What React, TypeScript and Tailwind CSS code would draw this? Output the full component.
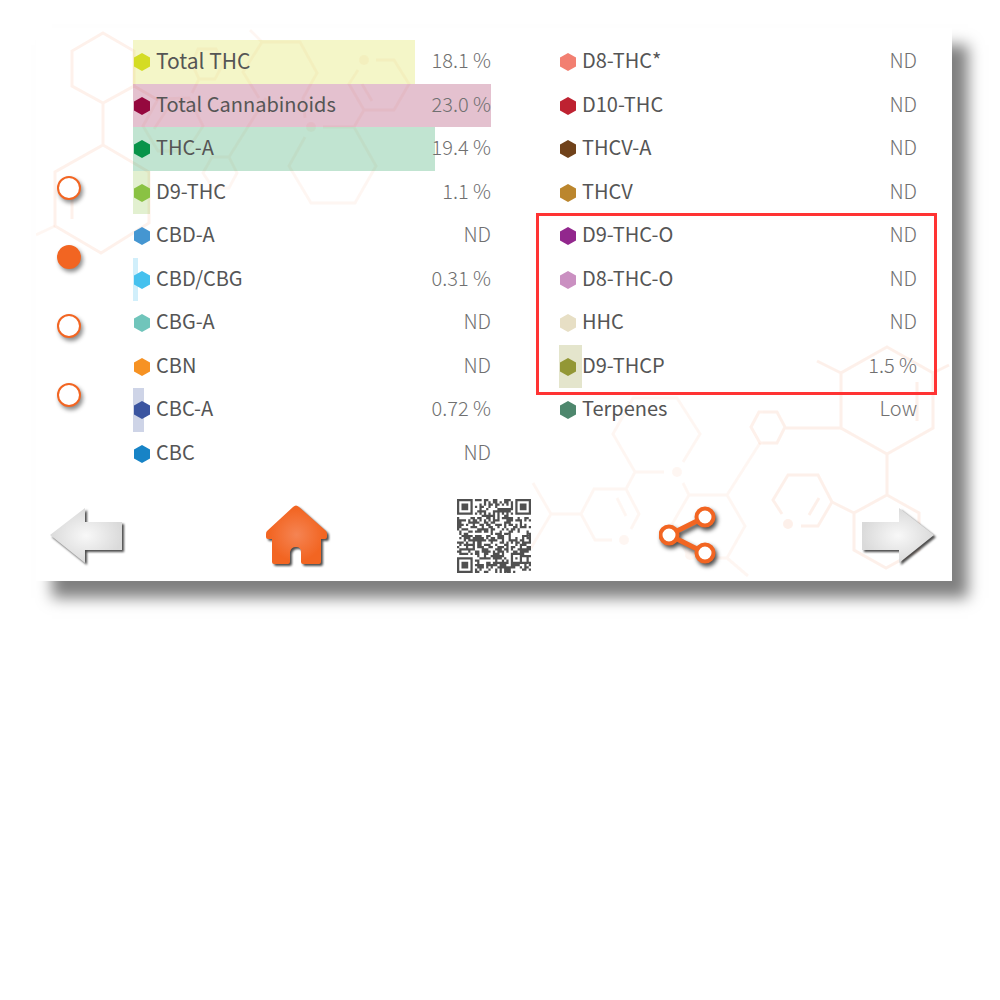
import React from 'react';

type Compound = {
  name: string;
  color: string;
  value?: number;
  label?: string;
};

const cannabinoids: Compound[] = [
  { name: 'Total THC', color: '#d4dc24', value: 18.1, label: '18.1 %' },
  { name: 'Total Cannabinoids', color: '#95083e', value: 23.0, label: '23.0 %' },
  { name: 'THC-A', color: '#079349', value: 19.4, label: '19.4 %' },
  { name: 'D9-THC', color: '#8ac243', value: 1.1, label: '1.1 %' },
  { name: 'CBD-A', color: '#4596d1' },
  { name: 'CBD/CBG', color: '#46c1ee', value: 0.31, label: '0.31 %' },
  { name: 'CBG-A', color: '#70c5bb' },
  { name: 'CBN', color: '#f69223' },
  { name: 'CBC-A', color: '#3b55a0', value: 0.72, label: '0.72 %' },
  { name: 'CBC', color: '#1783c6' },
];

const others: Compound[] = [
  { name: 'D8-THC*', color: '#f27f71' },
  { name: 'D10-THC', color: '#be2231' },
  { name: 'THCV-A', color: '#70421a' },
  { name: 'THCV', color: '#bb862d' },
  { name: 'D9-THC-O', color: '#92278d' },
  { name: 'D8-THC-O', color: '#ca90c1' },
  { name: 'HHC', color: '#e7dfc5' },
  { name: 'D9-THCP', color: '#939735', value: 1.5, label: '1.5 %' },
  { name: 'Terpenes', color: '#4e876d', label: 'Low' },
];

const MAX_VALUE = 23;
const pages = ['Overview', 'Cannabinoids', 'Terpenes', 'Details'];

const Results = ({ rows, title }: { rows: Compound[]; title: string }) => (
  <table aria-label={title} className="w-full border-collapse">
    <tbody>
      {rows.map((row, i) => (
        <tr key={row.name} className={i % 2 === 0 ? 'relative h-11' : 'relative h-[43px]'}>
          <th scope="row" className="p-0 text-left font-normal text-[#555]">
            {row.value !== undefined && (
              <span
                className="absolute inset-y-0 left-0 opacity-25"
                style={{ width: `${(row.value / MAX_VALUE) * 100}%`, backgroundColor: row.color }}
              />
            )}
            <span className="relative flex items-center gap-1.5 pl-px">
              <svg viewBox="0 0 16 18" className="h-[18px] w-4" fill={row.color} aria-hidden="true">
                <path d="M8 0l8 4.5v9L8 18l-8-4.5v-9z" />
              </svg>
              <span className={row.name === 'Total THC' ? 'pb-1 text-[21px]' : 'pb-1'}>{row.name}</span>
            </span>
          </th>
          <td className="relative p-0 pb-1 text-right font-light text-[#707070]">{row.label ?? 'ND'}</td>
        </tr>
      ))}
    </tbody>
  </table>
);

// Molecule line art behind the results
const Molecules = () => (
  <svg
    viewBox="36 28 916 553"
    className="absolute inset-0 h-full w-full"
    fill="none"
    stroke="#f26522"
    strokeWidth="3"
    aria-hidden="true"
  >
    <g opacity="0.09">
      <path d="M103 33l31 18v35l-31 17-31-17V51zM103 103v42M103 145l46 27v51l-48 30-46-27v-54zM72 200v19M134 86l24 14" />
      <path d="M887 347l46 26v55l-46 26-46-26v-55zM817 361l24 12M933 373l16-8M917 382v39M887 454v41M887 495l32 18v37l-33 18-32-18v-37zM854 513l-22-11" />
      <path d="M782 514l-9-14 15-25h30l14 27-14 24h-17M819 498l-10 17" />
      <circle cx="788" cy="524" r="5" fill="#f26522" stroke="none" />
      <path d="M759 412h18l8 15-8 16h-17l-9-16zM785 428h56" />
    </g>
    <g opacity="0.05">
      <path d="M158 99l31-1 14 28-16 25h-29l-15-25zM168 108l-14 21" />
      <path d="M55 226l-19 9M198 49h18l7 15-8 15h-16l-7-15zM199 79l-7 14M212 157h17l8 16-8 15h-16l-10-15zM229 157l37-59" />
      <path d="M250 30l12 12h38l17 31-14 25 2 20M262 42l-19 30 16 26" />
      <path d="M323 127h31l22 39-21 37h-44l-22-37 16-29M354 127l10-17h30l15-26-15-24h-18M364 110l-15-26 9-14M362 84l10 17" />
      <circle cx="311" cy="127" r="5" fill="#f26522" stroke="none" />
      <circle cx="364" cy="60" r="5" fill="#f26522" stroke="none" />
      <path d="M683 462l17-28-23-36h-44l-20 36 22 38h29M635 472l-9 17M631 529l8-15-13-25h-32l-13 25 14 26h17M617 498l9 18M581 514h-30l-18-31M551 514l-20 34" />
      <circle cx="677" cy="472" r="5" fill="#f26522" stroke="none" />
      <circle cx="624" cy="540" r="5" fill="#f26522" stroke="none" />
      <path d="M683 483l6 12h38l18 31-18 32h-37l-19-32 18-31M727 558l21 18M727 495l33-52" />
      <circle cx="690" cy="555" r="5" fill="#f26522" stroke="none" />
    </g>
  </svg>
);

const QR_SIZE = 33;

const isDark = (x: number, y: number) => {
  // finder patterns in three corners
  const corners = [[0, 0], [QR_SIZE - 7, 0], [0, QR_SIZE - 7]];
  for (const [cx, cy] of corners) {
    const d = Math.max(Math.abs(x - cx - 3), Math.abs(y - cy - 3));
    if (d <= 4) return d !== 2 && d !== 4;
  }
  // alignment pattern
  const a = Math.max(Math.abs(x - 26), Math.abs(y - 26));
  if (a <= 2) return a !== 1;
  // timing lines
  if (x === 6 || y === 6) return (x + y) % 2 === 0;
  const n = Math.sin(x * 127.1 + y * 311.7) * 43758.5453;
  return n - Math.floor(n) < 0.53;
};

const QrCode = () => {
  let d = '';
  for (let y = 0; y < QR_SIZE; y++) {
    for (let x = 0; x < QR_SIZE; x++) {
      if (isDark(x, y)) d += `M${x} ${y}h1v1h-1z`;
    }
  }
  return (
    <svg viewBox="0 0 33 33" className="h-[74px] w-[74px]" fill="#505050" role="img" aria-label="QR code">
      <path d={d} />
    </svg>
  );
};

const Arrow = ({ id, className }: { id: string; className?: string }) => (
  <svg viewBox="0 0 73 58" className={className} aria-hidden="true">
    <defs>
      <radialGradient id={id} cx="0.5" cy="0.5" r="0.5">
        <stop offset="0" stopColor="#f8f8f8" />
        <stop offset="1" stopColor="#dadada" />
      </radialGradient>
    </defs>
    <path d="M0 15h37V1l35 27-35 28V43H0z" fill={`url(#${id})`} />
  </svg>
);

const App = () => {
  return (
    <div className="bg-white pt-7 pr-12 pb-12 pl-9 font-['Noto_Sans_CJK_SC','Noto_Sans',sans-serif] text-xl leading-none">
      <main className="relative bg-white pt-3 shadow-[16px_17px_14px_rgba(0,0,0,0.5)]">
        <Molecules />

        <div className="relative flex pr-[35px]">
          {/* Page dots */}
          <nav aria-label="Pages" className="flex w-[97px] shrink-0 flex-col gap-[45px] pt-[136px] pl-[21px]">
            {pages.map((page, i) => (
              <button
                key={page}
                type="button"
                aria-label={page}
                className={
                  i === 1
                    ? 'size-6 rounded-full border-2 border-[#f26522] bg-[#f26522] shadow-[2px_3px_4px_rgba(0,0,0,0.45)]'
                    : 'size-6 rounded-full border-2 border-[#f26522] bg-white shadow-[2px_3px_4px_rgba(0,0,0,0.45)]'
                }
              />
            ))}
          </nav>

          <div className="grid flex-1 grid-cols-2 items-start gap-[68px]">
            <Results rows={cannabinoids} title="Cannabinoids" />
            <div className="relative">
              <Results rows={others} title="Other compounds" />
              <div className="pointer-events-none absolute top-[173px] -right-5 -left-[23px] h-[182px] border-[3px] border-[#ff3333]" />
            </div>
          </div>
        </div>

        {/* Toolbar */}
        <div className="relative flex items-center justify-between pt-6 pr-[17px] pb-2 pl-[13px]">
          <button type="button" aria-label="Previous">
            <span className="block drop-shadow-[2px_2px_1px_rgba(0,0,0,0.7)]">
              <Arrow id="arrow-prev" className="h-[58px] w-[73px] -scale-x-100" />
            </span>
          </button>
          <div className="flex items-center gap-32">
            <button type="button" aria-label="Home">
              <svg viewBox="0 0 64 62" className="h-[62px] w-16 drop-shadow-[2px_2px_1px_rgba(0,0,0,0.7)]">
                <defs>
                  <radialGradient id="home" cx="0.5" cy="0.5" r="0.45">
                    <stop offset="0" stopColor="#f58453" />
                    <stop offset="1" stopColor="#f26522" />
                  </radialGradient>
                </defs>
                <path
                  d="M28 2q3-3 6 0l27 24q1 1 1 3v3q0 2-2 2h-4v23q0 2-2 2H38q-2 0-2-2V47q0-5-5-5t-6 5v10q0 2-2 2H9q-2 0-2-2V34H3q-2 0-2-2v-3q0-2 1-3z"
                  fill="url(#home)"
                />
              </svg>
            </button>
            <QrCode />
            <button type="button" aria-label="Share">
              <svg
                viewBox="0 0 60 60"
                className="size-[60px] drop-shadow-[2px_3px_2px_rgba(0,0,0,0.7)]"
                fill="#fff"
                stroke="#f26522"
                strokeWidth="4"
              >
                <path d="M46 11L10 29l36 18" fill="none" strokeWidth="5" />
                <circle cx="46" cy="11" r="8.5" />
                <circle cx="10" cy="29" r="8.5" />
                <circle cx="46" cy="47" r="8.5" />
              </svg>
            </button>
          </div>
          <button type="button" aria-label="Next">
            <span className="block drop-shadow-[2px_2px_1px_rgba(0,0,0,0.7)]">
              <Arrow id="arrow-next" className="h-[58px] w-[73px]" />
            </span>
          </button>
        </div>
      </main>
    </div>
  );
};

export default App;
